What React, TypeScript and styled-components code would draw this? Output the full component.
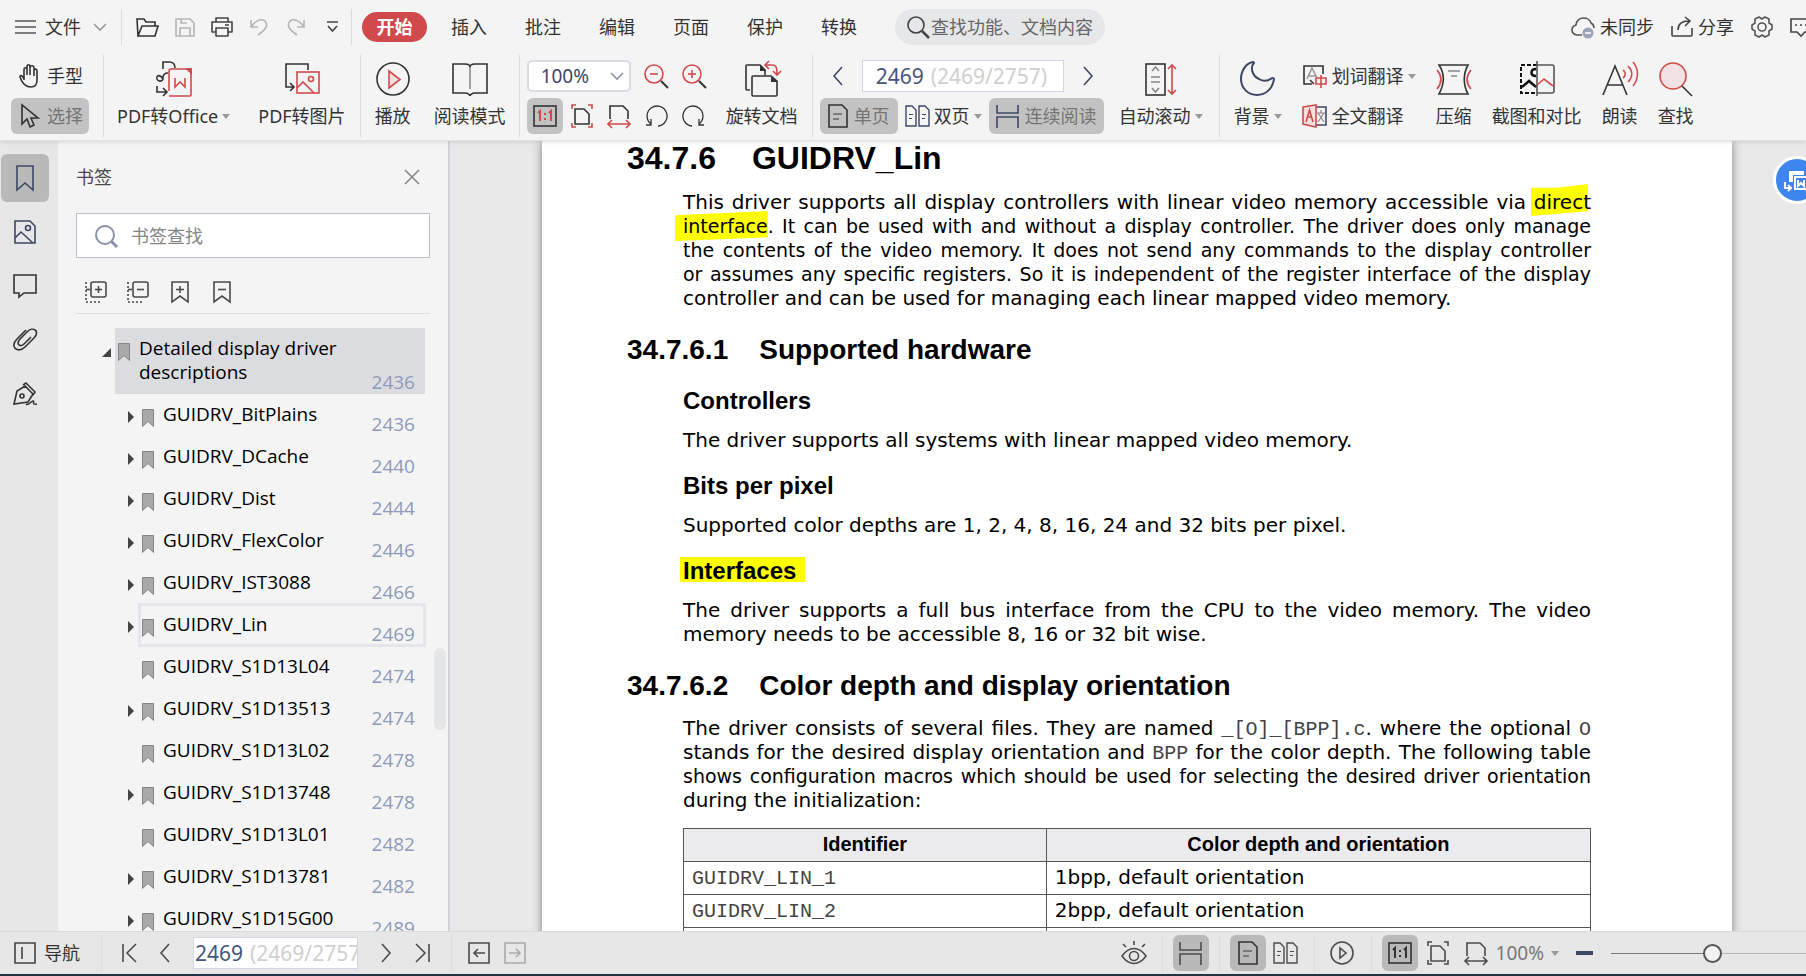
import React from "react";
import styled, { createGlobalStyle, css } from "styled-components";

const RED = "#d04a4c";
const INK = "#333333";
const NAVY = "#3c4866";

const GlobalStyle = createGlobalStyle`
  *, *::before, *::after { box-sizing: border-box; }
  body {
    margin: 0;
    overflow: hidden;
    background: #e8e8e8;
    color: ${INK};
    font-family: "Noto Sans", "Noto Sans CJK SC", sans-serif;
    font-size: 18px;
    line-height: 24px;
  }
  button, input, select { font: inherit; color: inherit; }
`;

/* ---------- shared parts ---------- */

const Shell = styled.div`
  height: 100vh;
  display: flex;
  flex-direction: column;
  overflow: hidden;
`;

const Svg = styled.svg`
  flex: none;
  display: block;
  fill: none;
  stroke: currentColor;
  overflow: visible;
`;

type IconProps = { w?: number; h?: number; sw?: number; color?: string; children: React.ReactNode };
const Icon = ({ w = 24, h = 24, sw = 1.6, color, children }: IconProps) => (
  <Svg width={w} height={h} viewBox={`0 0 ${w} ${h}`} color={color} aria-hidden="true">
    <g strokeWidth={sw}>{children}</g>
  </Svg>
);

const Caret = styled.span`
  flex: none;
  border: 4px solid transparent;
  border-top: 5px solid #999;
  border-bottom: 0;
`;

const Rule = styled.span`
  flex: none;
  align-self: stretch;
  width: 1px;
  background: #dcdcde;
`;

const PlainButton = styled.button`
  flex: none;
  display: flex;
  align-items: center;
  padding: 0;
  border: 0;
  background: none;
  white-space: nowrap;
`;

/* ---------- menu bar ---------- */

const Header = styled.header`
  flex: none;
  position: relative;
  z-index: 2;
  background: #f4f4f4;
  border-bottom: 1px solid #e2e2e2;
  box-shadow: 0 1px 4px rgba(0, 0, 0, 0.12);
`;

const MenuBar = styled.nav`
  display: flex;
  align-items: center;
  height: 54px;
  padding: 9px 0;
  overflow: hidden;
`;

const FileButton = styled(PlainButton)`
  gap: 9px;
  width: 121px;
  padding-left: 15px;
  svg:last-child { margin-left: 3px; }
`;

const QuickTools = styled.div`
  flex: none;
  display: flex;
  align-items: center;
  padding-left: 7px;
`;

const QuickButton = styled(PlainButton)`
  justify-content: center;
  width: 37px;
  height: 36px;
`;

const StartTab = styled(PlainButton)`
  justify-content: center;
  width: 65px;
  height: 30px;
  margin: 0 24px 0 10px;
  border-radius: 15px;
  background: ${RED};
  color: #fff;
  font-weight: 700;
`;

const MenuTabs = styled.div`
  flex: none;
  display: flex;
  gap: 38px;
`;

const CommandSearch = styled.label`
  flex: none;
  display: flex;
  align-items: center;
  gap: 1px;
  width: 210px;
  height: 36px;
  margin-left: 38px;
  padding: 0 10px 0 12px;
  border-radius: 18px;
  background: #e6e7e9;
  input {
    flex: 1;
    min-width: 0;
    padding: 0;
    border: 0;
    background: none;
    outline: 0;
  }
  input::placeholder { color: #666; opacity: 1; }
`;

const AccountTools = styled.div`
  flex: none;
  display: flex;
  align-items: center;
  gap: 17px;
  margin-left: auto;
  margin-right: -6px;
`;

const AccountButton = styled(PlainButton)`
  gap: 5px;
`;

/* ---------- ribbon ---------- */

const Ribbon = styled.div`
  display: flex;
  height: 86px;
  padding: 1px 0 3px;
`;

const Group = styled.div<{ $left: number; $right?: number; $gap?: number }>`
  flex: none;
  display: flex;
  gap: ${(p) => p.$gap ?? 0}px;
  padding: 0 ${(p) => p.$right ?? 0}px 0 ${(p) => p.$left}px;
`;

const BigTool = styled(PlainButton)`
  flex-direction: column;
  gap: 6px;
  padding-top: 6px;
`;

const Label = styled.span`
  display: flex;
  align-items: center;
  gap: 4px;
  height: 26px;
`;

const Rows = styled.div`
  flex: none;
  display: flex;
  flex-direction: column;
  gap: 4px;
  padding-top: 3px;
`;

const Row = styled.div<{ $gap?: number }>`
  display: flex;
  align-items: center;
  gap: ${(p) => p.$gap ?? 0}px;
  height: 36px;
`;

const SmallTool = styled(PlainButton)<{ $on?: boolean; $pad?: number }>`
  gap: 6px;
  height: 36px;
  padding: 0 ${(p) => p.$pad ?? 6}px;
  border-radius: 6px;
  ${(p) =>
    p.$on &&
    css`
      background: #c2c2c2;
      color: #747474;
    `}
`;

const ZoomSelect = styled.span`
  position: relative;
  flex: none;
  width: 104px;
  height: 32px;
  select {
    appearance: none;
    width: 100%;
    height: 100%;
    padding: 0 0 0 12px;
    border: 2px solid #dadae2;
    border-radius: 5px;
    background: #fff;
    color: ${NAVY};
    font-size: 19px;
  }
  svg {
    position: absolute;
    right: 7px;
    top: 12px;
    pointer-events: none;
  }
`;

const PageField = styled.label<{ $small?: boolean }>`
  flex: none;
  display: flex;
  align-items: center;
  gap: 7px;
  width: ${(p) => (p.$small ? 165 : 202)}px;
  height: 32px;
  padding-left: ${(p) => (p.$small ? 1 : 13)}px;
  border: 1px solid #cfd6e4;
  background: #fff;
  color: #cfcfcf;
  font-size: 21px;
  white-space: nowrap;
  overflow: hidden;
  input {
    flex: none;
    width: 48px;
    padding: 0;
    border: 0;
    outline: 0;
    color: #46557c;
  }
`;

const Arrow = styled(PlainButton)`
  justify-content: center;
  width: 36px;
  height: 32px;
`;

/* ---------- side panel ---------- */

const Body = styled.div`
  flex: 1;
  min-height: 0;
  display: flex;
`;

const Rail = styled.nav`
  flex: none;
  width: 58px;
  display: flex;
  flex-direction: column;
  gap: 6px;
  padding: 13px 0 0 1px;
  background: #e7e7e7;
`;

const RailButton = styled.button<{ $on?: boolean }>`
  display: flex;
  align-items: center;
  justify-content: center;
  width: 48px;
  height: 48px;
  padding: 0;
  border: 0;
  border-radius: 6px;
  background: ${(p) => (p.$on ? "#b9b9b9" : "none")};
`;

const Panel = styled.aside`
  flex: none;
  position: relative;
  width: 392px;
  display: flex;
  flex-direction: column;
  background: #f4f4f4;
  border-right: 2px solid #d1d2d9;
  overflow: hidden;
`;

const PanelHead = styled.div`
  flex: none;
  display: flex;
  align-items: center;
  justify-content: space-between;
  height: 72px;
  padding: 0 28px 0 18px;
  h2 { margin: 0; font-size: 18px; font-weight: 400; color: #4a4a4a; }
`;

const PanelSearch = styled.label`
  flex: none;
  display: flex;
  align-items: center;
  gap: 14px;
  height: 45px;
  margin: 0 18px;
  padding-left: 18px;
  border: 1px solid #bcbfca;
  background: #fff;
  input { flex: 1; min-width: 0; padding: 0; border: 0; outline: 0; background: none; }
  input::placeholder { color: #858585; opacity: 1; }
`;

const PanelTools = styled.div`
  flex: none;
  display: flex;
  align-items: flex-start;
  gap: 20px;
  height: 56px;
  margin: 0 18px;
  padding: 23px 0 0 9px;
  border-bottom: 1px solid #dedfe2;
`;

const Tree = styled.ul`
  flex: 1;
  min-height: 0;
  margin: 0;
  padding: 14px 23px 0 38px;
  list-style: none;
  overflow: hidden;
  color: #000;
  font-family: "Open Sans", "Noto Sans", sans-serif;
  font-size: 19px;
`;

const TreeItem = styled.li<{ $root?: boolean }>`
  display: flex;
  height: ${(p) => (p.$root ? 66 : 42)}px;
  padding-left: ${(p) => (p.$root ? 0 : 24)}px;
`;

const Twist = styled.span<{ $open?: boolean }>`
  flex: none;
  width: 19px;
  display: flex;
  justify-content: ${(p) => (p.$open ? "flex-start" : "center")};
  padding: ${(p) => (p.$open ? "20px 0 0 6px" : "17px 0 0 3px")};
`;

const Entry = styled.button<{ $root?: boolean; $focus?: boolean }>`
  flex: 1;
  display: flex;
  gap: 9px;
  padding: 8px 10px 0 3px;
  border: 0;
  text-align: left;
  background: ${(p) => (p.$root ? "#dbdce0" : "none")};
  ${(p) =>
    p.$focus &&
    css`
      outline: 3px solid #e5e6e9;
      outline-offset: -2px;
    `}
  svg { margin-top: 7px; }
`;

const EntryText = styled.span`
  flex: 1;
`;

const EntryPage = styled.span`
  align-self: flex-end;
  color: #8c9bbb;
`;

const ScrollThumb = styled.span`
  position: absolute;
  right: 2px;
  top: 507px;
  width: 12px;
  height: 82px;
  border-radius: 6px;
  background: #e4e5e7;
`;

/* ---------- document ---------- */

const Viewer = styled.main`
  flex: 1;
  min-width: 0;
  position: relative;
  padding: 0 74px 0 92px;
  background: #e8e8e8;
  overflow: hidden;
`;

const Sheet = styled.article`
  position: relative;
  isolation: isolate;
  min-height: 100%;
  padding: 0 141px 0 85px;
  background: #fff;
  box-shadow: 0 0 9px rgba(0, 0, 0, 0.45);
  color: #000;
  font-family: "Liberation Sans", sans-serif;
`;

const Title = styled.h1<{ $sub?: boolean }>`
  display: flex;
  gap: ${(p) => (p.$sub ? 31 : 36)}px;
  margin: ${(p) => (p.$sub ? "24px 0 1px" : "0 0 2px")};
  font-size: ${(p) => (p.$sub ? 28 : 32)}px;
  line-height: ${(p) => (p.$sub ? 32 : 34)}px;
`;

const Section = styled.section`
  display: flow-root;
  padding-left: 56px;
`;

const Topic = styled.h3`
  margin: 20px 0 0;
  font-size: 24px;
  line-height: 28px;
`;

const Para = styled.p`
  margin: 13px 0 0;
  font-family: "DejaVu Sans", sans-serif;
  font-size: 20px;
  line-height: 24px;
  white-space: nowrap;
`;

const Line = styled.span<{ $full?: boolean; $dense?: boolean }>`
  display: block;
  height: 24px;
  font-size: ${(p) => (p.$dense ? 19 : 20)}px;
  text-align: justify;
  text-align-last: ${(p) => (p.$full || p.$dense ? "justify" : "left")};
`;

const Code = styled.code`
  font-family: "Liberation Mono", monospace;
  font-size: 20px;
  line-height: 20px;
  color: #444;
`;

const Marker = styled.mark<{ $shape: string; $inset: string }>`
  position: relative;
  background: none;
  color: inherit;
  &::before {
    content: "";
    position: absolute;
    z-index: -1;
    inset: ${(p) => p.$inset};
    background: #ffff00;
    clip-path: polygon(${(p) => p.$shape});
  }
`;

const DataTable = styled.table`
  width: 100%;
  margin-top: 16px;
  border-collapse: collapse;
  table-layout: fixed;
  th, td {
    height: 33px;
    padding: 0 8px 2px;
    border: 1px solid #555;
    line-height: 24px;
  }
  th { background: #ebebed; font-size: 20px; }
  th:first-child { width: 40%; }
  td { font-family: "DejaVu Sans", sans-serif; font-size: 20px; }
`;

const FloatButton = styled.button`
  position: absolute;
  right: -15px;
  top: 15px;
  width: 48px;
  height: 48px;
  display: flex;
  align-items: center;
  padding: 0 0 0 8px;
  border: 3px solid #fff;
  border-radius: 50%;
  background: #3d86f0;
  color: #fff;
`;

/* ---------- status bar ---------- */

const StatusBar = styled.footer`
  flex: none;
  position: relative;
  z-index: 2;
  display: flex;
  align-items: center;
  height: 45px;
  padding: 3px 0;
  border-top: 1px solid #dadada;
  border-bottom: 2px solid #1f3445;
  background: #e7e7e7;
  overflow: hidden;
`;

const StatusGroup = styled.div<{ $pad: string; $gap?: number }>`
  flex: none;
  display: flex;
  align-items: center;
  gap: ${(p) => p.$gap ?? 0}px;
  padding: ${(p) => p.$pad};
`;

const StatusButton = styled(PlainButton)<{ $on?: boolean }>`
  justify-content: center;
  width: 36px;
  height: 36px;
  border-radius: 6px;
  color: #4c4c4c;
  background: ${(p) => (p.$on ? "#b9b9b9" : "none")};
`;

const NavLabel = styled(Label)`
  gap: 8px;
`;

const FieldSlot = styled.div`
  padding: 0 10px;
`;

const Spacer = styled.div`
  flex: 1;
`;

const Percent = styled(PlainButton)`
  gap: 7px;
  color: #777;
  font-size: 19px;
`;

const ZoomRange = styled.input`
  appearance: none;
  flex: none;
  width: 215px;
  height: 20px;
  margin: 0 -20px 0 0;
  background: linear-gradient(#777, #777) 0 50% / 92px 1px no-repeat,
    linear-gradient(#b5b5b5, #b5b5b5) 0 50% / 100% 1px no-repeat;
  &::-webkit-slider-thumb {
    appearance: none;
    width: 19px;
    height: 19px;
    border: 2px solid #555;
    border-radius: 50%;
    background: #f2f2f2;
  }
`;

/* ---------- icons ---------- */

const ChevronDown = ({ color = "#999" }: { color?: string }) => (
  <Icon w={14} h={8} color={color}><path d="M1 1l6 6 6-6" /></Icon>
);
const Left = () => <Icon w={12} h={20} color={NAVY}><path d="M10 1L2 10l8 9" /></Icon>;
const Right = () => <Icon w={12} h={20} color={NAVY}><path d="M2 1l8 9-8 9" /></Icon>;

const OneToOne = ({ color = RED }: { color?: string }) => (
  <Icon w={24} h={22} color={INK}>
    <rect x="1" y="1" width="22" height="20" />
    <g stroke={color} strokeWidth="2"><path d="M5 8l2-2v10M16 8l2-2v10" /><path d="M12 8v2M12 13v2" /></g>
  </Icon>
);
const FitPage = ({ color = RED }: { color?: string }) => (
  <Icon w={22} h={24}>
    <path d="M4 5h9l5 5v10H4z" />
    <path stroke={color} d="M1 5V1h4M17 1h4v4M21 19v4h-4M5 23H1v-4" />
  </Icon>
);
const FitWidth = ({ color = RED }: { color?: string }) => (
  <Icon w={24} h={24}>
    <path d="M3 15V2h13l5 5v8" />
    <path stroke={color} d="M2 20h20M5 16l-4 4 4 4M19 16l4 4-4 4" />
  </Icon>
);
const SinglePage = () => (
  <Icon w={20} h={24} color={INK}>
    <path d="M1 1h13l5 5v17H1z" /><path stroke="#666" d="M5 10h9M5 15h6" />
  </Icon>
);
const DoublePage = ({ color = NAVY }: { color?: string }) => (
  <Icon w={25} h={22} sw={1.4} color={color}>
    <path d="M1 1h6l4 4v16H1zM14 1h6l4 4v16H14z" />
    <path strokeWidth="1" d="M4 9.500h4M4 13.500h3M17 9.500h4M17 13.500h3" />
  </Icon>
);
const Continuous = ({ color = NAVY }: { color?: string }) => (
  <Icon w={23} h={23} color={color}>
    <path d="M1 0v8h21V0M1 23v-11h21v11" />
  </Icon>
);
const ZoomGlass = ({ plus }: { plus?: boolean }) => (
  <Icon w={25} h={25} color={RED}>
    <circle cx="10" cy="10" r="9" /><path d="M6 10h8" />{plus && <path d="M10 6v8" />}
    <path stroke={INK} strokeWidth="2" d="M17 17l7 7" />
  </Icon>
);
const Bookmark = () => (
  <Icon w={12} h={18} color="#858585" sw={1}>
    <path fill="#a9a9a9" d="M.5.5h11v17L6 12.500.5 17.500z" />
  </Icon>
);
const Collapse = ({ plus }: { plus?: boolean }) => (
  <Icon w={22} h={22} color="#4a4a4a">
    <rect x="6" y="1" width="15" height="15" rx="2" />
    <path d="M10 8.500h7" />{plus && <path d="M13.500 5v7" />}
    <path d="M1 1v20h14" strokeDasharray="2 2" /><path d="M1 8.500h4" />
  </Icon>
);
const MarkIcon = ({ plus }: { plus?: boolean }) => (
  <Icon w={22} h={22} color="#4a4a4a">
    <path d="M3 1h16v20l-8-6-8 6z" /><path d="M7 8.500h8" />{plus && <path d="M11 5v7" />}
  </Icon>
);

/* ---------- data ---------- */

const bookmarks: [string, string, boolean][] = [
  ["GUIDRV_BitPlains", "2436", true],
  ["GUIDRV_DCache", "2440", true],
  ["GUIDRV_Dist", "2444", true],
  ["GUIDRV_FlexColor", "2446", true],
  ["GUIDRV_IST3088", "2466", true],
  ["GUIDRV_Lin", "2469", true],
  ["GUIDRV_S1D13L04", "2474", false],
  ["GUIDRV_S1D13513", "2474", true],
  ["GUIDRV_S1D13L02", "2478", false],
  ["GUIDRV_S1D13748", "2478", true],
  ["GUIDRV_S1D13L01", "2482", false],
  ["GUIDRV_S1D13781", "2482", true],
  ["GUIDRV_S1D15G00", "2489", true],
];

const macros = [
  ["GUIDRV_LIN_1", "1bpp, default orientation"],
  ["GUIDRV_LIN_2", "2bpp, default orientation"],
  ["GUIDRV_LIN_4", "4bpp, default orientation"],
];

/* ---------- sections ---------- */

const TopMenu = () => (
  <MenuBar>
    <FileButton>
      <Icon w={21} h={14} color="#555"><path d="M0 1h21M0 7h21M0 13h21" /></Icon>
      文件
      <ChevronDown />
    </FileButton>
    <Rule />
    <QuickTools>
      <QuickButton aria-label="打开">
        <Icon w={23} h={19}><path d="M2 18L1 1h7l2 3h9v4M2 18L6 8h16l-3 10z" /></Icon>
      </QuickButton>
      <QuickButton aria-label="保存">
        <Icon w={20} h={19} color="#b5b5b5"><path d="M1 1h14l4 4v13H1zM5 18v-8h10v8M6 1v4h6" /></Icon>
      </QuickButton>
      <QuickButton aria-label="打印">
        <Icon w={22} h={20} color="#444"><path strokeLinejoin="round" d="M5 5V1h12v4M5 15H1V5h20v10h-4M5 11h12v8H5zM14 8h4" /></Icon>
      </QuickButton>
      <QuickButton aria-label="撤销">
        <Icon w={18} h={18} color="#b5b5b5"><path d="M1 2v7h7M1 9C5 3 11 0 15 3c4 5 0 9-7 14" /></Icon>
      </QuickButton>
      <QuickButton aria-label="恢复">
        <Icon w={18} h={18} color="#b5b5b5"><path d="M17 2v7h-7M17 9C13 3 7 0 3 3c-4 5 0 9 7 14" /></Icon>
      </QuickButton>
      <QuickButton aria-label="更多">
        <Icon w={13} h={12} color="#444"><path d="M1 1h11M2 5l4.500 5L11 5" /></Icon>
      </QuickButton>
    </QuickTools>
    <Rule />
    <StartTab>开始</StartTab>
    <MenuTabs>
      {["插入", "批注", "编辑", "页面", "保护", "转换"].map((t) => <PlainButton key={t}>{t}</PlainButton>)}
    </MenuTabs>
    <CommandSearch>
      <Icon w={23} h={24} color="#444"><circle cx="9" cy="10" r="8" /><path d="M15 16l7 7" strokeWidth="2.500" /></Icon>
      <input aria-label="查找功能、文档内容" placeholder="查找功能、文档内容" />
    </CommandSearch>
    <AccountTools>
      <AccountButton>
        <Icon w={24} h={21} color="#555">
          <path d="M11 18H6C0 17-1 10 5 8 6-1 18-1 20 6c2 1 3 3 3 5" />
          <circle cx="17" cy="16" r="5.500" fill="#9aa3b8" stroke="none" /><path stroke="#fff" d="M14 16h6" />
        </Icon>
        未同步
      </AccountButton>
      <AccountButton>
        <Icon w={22} h={20} color="#444"><path d="M1 9v9a1 1 0 001 1h18a1 1 0 001-1v-7M7 13c0-6 4-9 11-9M14 0l5 4-5 5" /></Icon>
        分享
      </AccountButton>
      <AccountButton aria-label="设置">
        <Icon w={22} h={22} color="#555">
          <path strokeLinejoin="round" d="M8 1l3 2 3-2 4 2v4l3 2v4l-3 2v4l-4 2-3-2-3 2-4-2v-4l-3-2V9l3-2V3z" /><circle cx="11" cy="11" r="4" />
        </Icon>
      </AccountButton>
      <AccountButton aria-label="反馈">
        <Icon w={22} h={20} color="#444"><path d="M1 2h20v13h-6l-4 4-4-4H1z" /><path d="M5 8h2M10 8h2M15 8h2" /></Icon>
      </AccountButton>
    </AccountTools>
  </MenuBar>
);

const RibbonBar = () => (
  <Ribbon>
    <Group $left={11} $right={14}>
      <Rows>
        <Row>
          <SmallTool>
            <Icon w={24} h={24}>
              <path d="M7 16V6c0-3 3-3 3 0v5-8c0-3 3-3 3 0v8-7c0-3 4-3 4 0v8-5c0-3 3-2 3 0v9c0 4-2 7-6 7-6 0-9-4-11-10 0-3 3-1 4 2" />
            </Icon>
            手型
          </SmallTool>
        </Row>
        <Row>
          <SmallTool $on>
            <Icon w={24} h={24} color={INK}><path d="M5 1v19l5-5 3 8 4-2-3-7h7z" /></Icon>
            选择
          </SmallTool>
        </Row>
      </Rows>
    </Group>
    <Rule />
    <Group $left={13} $right={14} $gap={28}>
      <BigTool>
        <Icon w={36} h={36}>
          <path d="M7 8V1h6c5 0 6 3 6 6M7 18c-3-5-7-4-6 0 1 3 6 3 6-1 0-3 1-5 5-5M1 25v6h10M7 27l4 4-4 4" />
          <path stroke={RED} d="M13 35h21a1 1 0 001-1V11l-4-3H15a2 2 0 00-2 2v20M19 17v9l5-5 5 5v-9" /><path fill={RED} stroke="none" d="M29 7h7v7z" />
        </Icon>
        <Label>PDF转Office<Caret /></Label>
      </BigTool>
      <BigTool>
        <Icon w={36} h={36}>
          <path d="M24 9V3H2v23h7M6 22l4 4-4 4" />
          <g stroke={RED}><rect x="13" y="11" width="22" height="21" /><path d="M13 27l6-6 11 11" /><circle cx="27" cy="18" r="2.500" /></g>
        </Icon>
        <Label>PDF转图片</Label>
      </BigTool>
    </Group>
    <Rule />
    <Group $left={14} $right={13} $gap={23}>
      <BigTool>
        <Icon w={36} h={36}><circle cx="18" cy="18" r="16" /><path stroke={RED} fill="#f6dede" d="M14 10v17l11-8.500z" /></Icon>
        <Label>播放</Label>
      </BigTool>
      <BigTool>
        <Icon w={36} h={36}><path d="M1 3h12c3 0 5 1 5 3 0-2 2-3 5-3h12v29H23c-3 0-5 2-5 3 0-1-2-3-5-3H1z" /><path stroke="#888" d="M18 6v22" /></Icon>
        <Label>阅读模式</Label>
      </BigTool>
    </Group>
    <Rule />
    <Group $left={7} $right={14} $gap={19}>
      <Rows>
        <Row $gap={13}>
          <ZoomSelect>
            <select aria-label="缩放比例" defaultValue="100%"><option>100%</option></select>
            <ChevronDown color="#8a94a8" />
          </ZoomSelect>
          <PlainButton aria-label="缩小"><ZoomGlass /></PlainButton>
          <PlainButton aria-label="放大"><ZoomGlass plus /></PlainButton>
        </Row>
        <Row $gap={8}>
          <SmallTool $on aria-label="实际大小"><OneToOne /></SmallTool>
          <Row $gap={14}>
            <PlainButton aria-label="适合页面"><FitPage /></PlainButton>
            <PlainButton aria-label="适合宽度"><FitWidth /></PlainButton>
            <PlainButton aria-label="向左旋转">
              <Icon w={23} h={24} sw={1.3}><path d="M6 20A10 10 0 1 1 13 22M1 21h5v-6" /></Icon>
            </PlainButton>
            <PlainButton aria-label="向右旋转">
              <Icon w={23} h={24} sw={1.3}><path d="M17 20A10 10 0 1 0 10 22M22 21h-5v-6" /></Icon>
            </PlainButton>
          </Row>
        </Row>
      </Rows>
      <BigTool>
        <Icon w={36} h={36}>
          <path d="M6 29H3a1 1 0 01-1-1V5a1 1 0 011-1h13l5 5v5M9 15h18l6 5v14a1 1 0 01-1 1H9a1 1 0 01-1-1V16a1 1 0 011-1z" />
          <path fill={INK} stroke="none" d="M16 4l6 6h-6zM27 15l7 6h-7z" />
          <path stroke={RED} d="M21 4h7c4 0 5 2 5 9M25 0l-4 4 4 4M29 10l4 4 4-4" />
        </Icon>
        <Label>旋转文档</Label>
      </BigTool>
    </Group>
    <Rule />
    <Group $left={7} $right={16} $gap={13}>
      <Rows>
        <Row $gap={6}>
          <Arrow aria-label="上一页"><Left /></Arrow>
          <PageField>
            <input aria-label="页码" defaultValue="2469" />(2469/2757)
          </PageField>
          <Arrow aria-label="下一页"><Right /></Arrow>
        </Row>
        <Row $gap={7}>
          <SmallTool $on $pad={8}><SinglePage />单页</SmallTool>
          <PlainButton><Label><DoublePage />双页<Caret /></Label></PlainButton>
          <SmallTool $on $pad={7}><Continuous />连续阅读</SmallTool>
        </Row>
      </Rows>
      <BigTool>
        <Icon w={36} h={36}>
          <rect x="3" y="3" width="19" height="31" /><path stroke="#888" d="M9 10l3.500-4 3.500 4M8 16h9M8 21h9M9 27l3.500 4 3.500-4" />
          <path stroke={RED} d="M29 4v29M25 8l4-4 4 4M25 29l4 4 4-4" />
        </Icon>
        <Label>自动滚动<Caret /></Label>
      </BigTool>
    </Group>
    <Rule />
    <Group $left={14} $gap={20}>
      <BigTool>
        <Icon w={36} h={36} color={NAVY}>
          <path strokeLinejoin="round" strokeWidth="2" d="M14 2C10 6 12 15 19 18c5 3 9 2 13-1 1 0 2 0 2 1-1 9-8 16-17 16C8 34 1 27 1 18 1 10 6 2 13 1c1 0 1 1 1 1z" />
        </Icon>
        <Label>背景<Caret /></Label>
      </BigTool>
      <Rows>
        <Row>
          <PlainButton>
            <Label>
              <Icon w={26} h={24}>
                <path d="M10 20H2V2h19v8M8 16l4 4" /><path stroke="#999" d="M5 15l5-11 5 10M7 12h7" /><path stroke={RED} d="M14 14h10v6H14zM19 11v13" />
              </Icon>
              划词翻译<Caret />
            </Label>
          </PlainButton>
        </Row>
        <Row>
          <PlainButton>
            <Label>
              <Icon w={26} h={24}>
                <path stroke={NAVY} d="M14 3h10v18H14" /><path stroke="#888" strokeWidth="1.200" d="M15 9h8M19 6v3M22 9l-6 9M16 9l6 9" />
                <path stroke={RED} fill="#f9e0e0" d="M1 3l13-2v22L1 20z" /><path stroke={RED} d="M4 18L7.500 6 11 18M5 13h5" />
              </Icon>
              全文翻译
            </Label>
          </PlainButton>
        </Row>
      </Rows>
      <BigTool>
        <Icon w={36} h={36}>
          <path d="M3 4h29c-5 9-5 20 0 29H3c6-11 6-20 0-29z" /><path stroke="#888" d="M12 10h12M15 15h6" />
          <path stroke={RED} d="M1 9c5 6 5 13 0 19M35 9c-5 6-5 13 0 19" />
        </Icon>
        <Label>压缩</Label>
      </BigTool>
      <BigTool>
        <Icon w={36} h={36}>
          <path stroke="#111" strokeWidth="2" strokeDasharray="4 2" d="M18 4H2v28h16" /><path stroke="#555" d="M18 0v35M18 4h15a2 2 0 012 2v24a2 2 0 01-2 2H18" />
          <path stroke="#111" strokeWidth="2.500" d="M3 26l7-6 7 6M17 8c-6 0-6 7 0 7" /><path stroke={RED} d="M18 24l7-6 9 7" />
        </Icon>
        <Label>截图和对比</Label>
      </BigTool>
      <BigTool>
        <Icon w={36} h={36}>
          <path d="M1 34L13 5l12 29M5 24h16" /><path stroke={RED} d="M21 9c3 2 3 6 0 8M26 5c5 5 5 11 0 16M31 1c6 7 6 16 0 24" />
        </Icon>
        <Label>朗读</Label>
      </BigTool>
      <BigTool>
        <Icon w={36} h={36}><circle cx="15" cy="15" r="13" stroke={RED} fill="#f3e2e3" /><path d="M24 25l10 10" /></Icon>
        <Label>查找</Label>
      </BigTool>
    </Group>
  </Ribbon>
);

const SidePanel = () => (
  <>
    <Rail>
      <RailButton $on aria-label="书签"><Icon w={18} h={26} color={NAVY}><path d="M1 1h16v24l-8-7-8 7z" /></Icon></RailButton>
      <RailButton aria-label="缩略图">
        <Icon w={22} h={24} color={NAVY}><path d="M1 1h15l5 5v17H1zM1 18l6-6 12 11" /><circle cx="14" cy="8" r="2.500" /></Icon>
      </RailButton>
      <RailButton aria-label="批注"><Icon w={24} h={24}><path d="M1 1h22v18H11l-5 4v-4H1z" /></Icon></RailButton>
      <RailButton aria-label="附件">
        <Icon w={24} h={24}><path d="M13 2L4 11C-4 19 5 26 12 19l9-9c7-8-2-11-6-7l-8 8c-5 6 1 8 4 5l7-7" /></Icon>
      </RailButton>
      <RailButton aria-label="签名">
        <Icon w={24} h={24}><path d="M1 22L4 9l8-5 8 8-5 8zM10 3l3-2 9 9-2 3M13 22c3 2 5-3 7-3s-2 4 4 3" /><circle cx="9" cy="14" r="2" /></Icon>
      </RailButton>
    </Rail>
    <Panel>
      <PanelHead>
        <h2>书签</h2>
        <PlainButton aria-label="关闭"><Icon w={16} h={16} color="#888"><path d="M1 1l14 14M15 1L1 15" /></Icon></PlainButton>
      </PanelHead>
      <PanelSearch>
        <Icon w={22} h={24} color="#8991a6" sw={2}><circle cx="10" cy="11" r="9" /><path strokeWidth="3" d="M16 17l6 6" /></Icon>
        <input aria-label="书签查找" placeholder="书签查找" />
      </PanelSearch>
      <PanelTools>
        <PlainButton aria-label="全部展开"><Collapse plus /></PlainButton>
        <PlainButton aria-label="全部折叠"><Collapse /></PlainButton>
        <PlainButton aria-label="添加书签"><MarkIcon plus /></PlainButton>
        <PlainButton aria-label="删除书签"><MarkIcon /></PlainButton>
      </PanelTools>
      <Tree>
        <TreeItem $root>
          <Twist $open><Icon w={9} h={9}><path fill="#444" stroke="none" d="M9 0v9H0z" /></Icon></Twist>
          <Entry $root>
            <Bookmark />
            <EntryText>Detailed display driver<br />descriptions</EntryText>
            <EntryPage>2436</EntryPage>
          </Entry>
        </TreeItem>
        {bookmarks.map(([name, page, parent]) => (
          <TreeItem key={name}>
            <Twist>{parent && <Icon w={6} h={12}><path fill="#444" stroke="none" d="M0 0l6 6-6 6z" /></Icon>}</Twist>
            <Entry $focus={name === "GUIDRV_Lin"}>
              <Bookmark />
              <EntryText>{name}</EntryText>
              <EntryPage>{page}</EntryPage>
            </Entry>
          </TreeItem>
        ))}
      </Tree>
      <ScrollThumb />
    </Panel>
  </>
);

const Document = () => (
  <Viewer>
    <Sheet>
      <Title><span>34.7.6</span><span>GUIDRV_Lin</span></Title>
      <Section>
        <Para>
          <Line $full>This driver supports all display controllers with linear video memory accessible via <Marker $inset="-6px 3px -2px -3px" $shape="0 12%, 45% 12%, 100% 0, 100% 85%, 0 100%">direct</Marker></Line>
          <Line $dense><Marker $inset="-4px 0 -4px -8px" $shape="0 14%, 40% 8%, 100% 0, 100% 88%, 50% 94%, 0 100%">interface</Marker>. It can be used with and without a display controller. The driver does only manage</Line>
          <Line $dense>the contents of the video memory. It does not send any commands to the display controller</Line>
          <Line $dense>or assumes any specific registers. So it is independent of the register interface of the display</Line>
          <Line>controller and can be used for managing each linear mapped video memory.</Line>
        </Para>
      </Section>
      <Title as="h2" $sub><span>34.7.6.1</span><span>Supported hardware</span></Title>
      <Section>
        <Topic>Controllers</Topic>
        <Para><Line>The driver supports all systems with linear mapped video memory.</Line></Para>
        <Topic>Bits per pixel</Topic>
        <Para><Line>Supported color depths are 1, 2, 4, 8, 16, 24 and 32 bits per pixel.</Line></Para>
        <Topic><Marker $inset="0 -9px 2px -3px" $shape="0 0, 100% 0, 100% 100%, 0 100%">Interfaces</Marker></Topic>
        <Para>
          <Line $full>The driver supports a full bus interface from the CPU to the video memory. The video</Line>
          <Line>memory needs to be accessible 8, 16 or 32 bit wise.</Line>
        </Para>
      </Section>
      <Title as="h2" $sub><span>34.7.6.2</span><span>Color depth and display orientation</span></Title>
      <Section>
        <Para>
          <Line $full>The driver consists of several files. They are named <Code>_[O]_[BPP].c</Code>. where the optional <Code>O</Code></Line>
          <Line $full>stands for the desired display orientation and <Code>BPP</Code> for the color depth. The following table</Line>
          <Line $dense>shows configuration macros which should be used for selecting the desired driver orientation</Line>
          <Line>during the initialization:</Line>
        </Para>
        <DataTable>
          <thead><tr><th>Identifier</th><th>Color depth and orientation</th></tr></thead>
          <tbody>
            {macros.map(([id, text]) => <tr key={id}><td><Code>{id}</Code></td><td>{text}</td></tr>)}
          </tbody>
        </DataTable>
      </Section>
    </Sheet>
    <FloatButton aria-label="转换">
      <Icon w={26} h={24} sw={2}>
        <path fill="#fff" stroke="none" d="M5 3h15v4H9v7H5z" /><path d="M1 14v6h6M4 17l3 3-3 3" />
        <path d="M11 9h13v12H11z" /><path d="M14 12v6l3-3 3 3v-6" />
      </Icon>
    </FloatButton>
  </Viewer>
);

const Status = () => (
  <StatusBar>
    <StatusGroup $pad="0 21px 0 14px">
      <PlainButton>
        <NavLabel><Icon w={22} h={22} color="#444"><path d="M1 1h20v20H1zM8 5v12" /></Icon>导航</NavLabel>
      </PlainButton>
    </StatusGroup>
    <Rule />
    <StatusGroup $pad="0 11px 0 9px">
      <StatusButton aria-label="第一页"><Icon w={15} h={20}><path d="M1 1v18M14 1L5 10l9 9" /></Icon></StatusButton>
      <StatusButton aria-label="上一页"><Icon w={10} h={20}><path d="M9 1l-8 9 8 9" /></Icon></StatusButton>
      <FieldSlot>
        <PageField $small><input aria-label="当前页" defaultValue="2469" />(2469/2757)</PageField>
      </FieldSlot>
      <StatusButton aria-label="下一页"><Icon w={10} h={20}><path d="M1 1l8 9-8 9" /></Icon></StatusButton>
      <StatusButton aria-label="最后一页"><Icon w={15} h={20}><path d="M14 1v18M1 1l9 9-9 9" /></Icon></StatusButton>
    </StatusGroup>
    <Rule />
    <StatusGroup $pad="0 0 0 9px">
      <StatusButton aria-label="后退"><Icon w={22} h={22}><path d="M1 1h20v20H1zM17 11H6M10 7l-4 4 4 4" /></Icon></StatusButton>
      <StatusButton aria-label="前进"><Icon w={22} h={22} color="#aaa"><path d="M1 1h20v20H1zM5 11h11M12 7l4 4-4 4" /></Icon></StatusButton>
    </StatusGroup>
    <Spacer />
    <StatusGroup $pad="0 10px 0 0">
      <StatusButton aria-label="护眼模式">
        <Icon w={26} h={24}>
          <path d="M1 15c7-10 17-10 24 0-7 10-17 10-24 0z" /><circle cx="13" cy="15" r="4.500" /><path d="M13 0v4M2 3l3 3M24 3l-3 3" />
        </Icon>
      </StatusButton>
    </StatusGroup>
    <Rule />
    <StatusGroup $pad="0 10px"><StatusButton $on aria-label="连续阅读"><Continuous color="#4c4c4c" /></StatusButton></StatusGroup>
    <Rule />
    <StatusGroup $pad="0 10px" $gap={2}>
      <StatusButton $on aria-label="单页"><SinglePage /></StatusButton>
      <StatusButton aria-label="双页"><DoublePage color="#4c4c4c" /></StatusButton>
    </StatusGroup>
    <Rule />
    <StatusGroup $pad="0 10px">
      <StatusButton aria-label="播放"><Icon w={25} h={24}><circle cx="12" cy="12" r="11" /><path d="M10 7v10l6-5z" /></Icon></StatusButton>
    </StatusGroup>
    <Rule />
    <StatusGroup $pad="0 0 0 10px" $gap={2}>
      <StatusButton $on aria-label="实际大小"><OneToOne color="#333" /></StatusButton>
      <StatusButton aria-label="适合页面"><FitPage color="#4c4c4c" /></StatusButton>
      <StatusButton aria-label="适合宽度"><FitWidth color="#4c4c4c" /></StatusButton>
      <Percent>100%<Caret /></Percent>
    </StatusGroup>
    <StatusGroup $pad="0 0 0 17px" $gap={18}>
      <PlainButton aria-label="缩小"><Icon w={17} h={4} sw={4} color={NAVY}><path d="M0 2h17" /></Icon></PlainButton>
      <ZoomRange type="range" min={0} max={100} defaultValue={47} aria-label="缩放" />
    </StatusGroup>
  </StatusBar>
);

export default function App() {
  return (
    <Shell>
      <GlobalStyle />
      <Header>
        <TopMenu />
        <RibbonBar />
      </Header>
      <Body>
        <SidePanel />
        <Document />
      </Body>
      <Status />
    </Shell>
  );
}
